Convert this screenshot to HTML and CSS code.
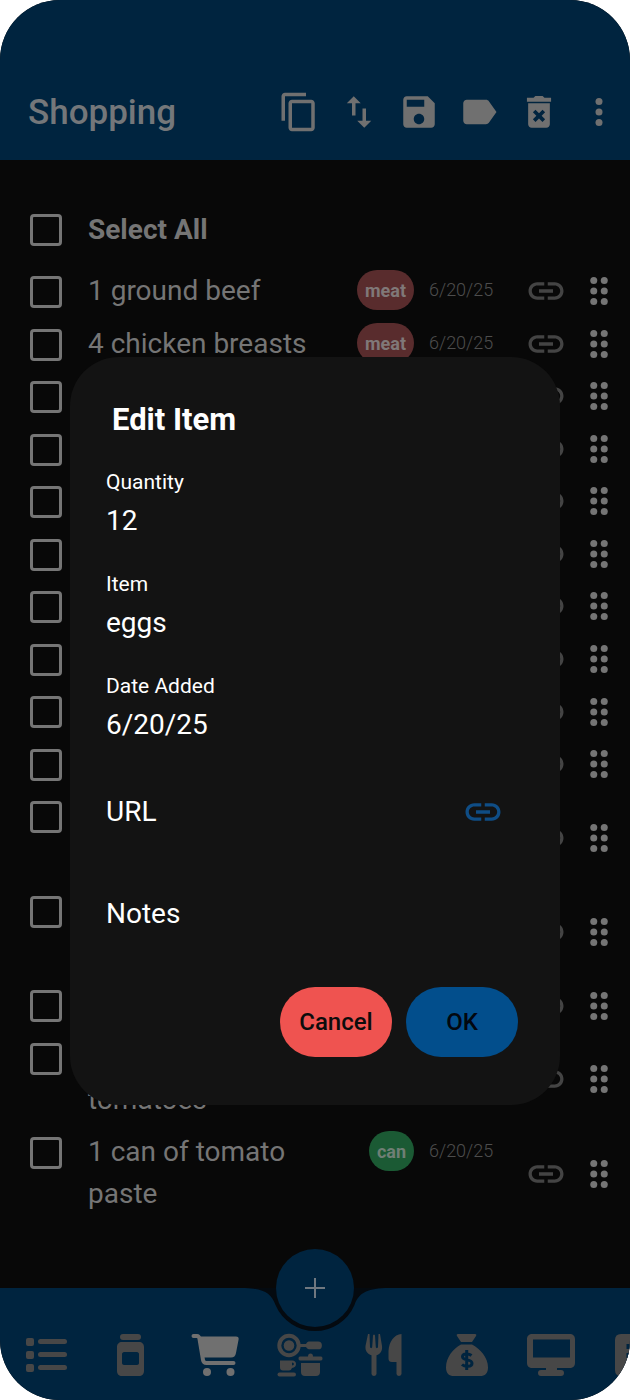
FILE: index.html
```html
<!DOCTYPE html>
<html lang="en">
<head>
<meta charset="utf-8">
<meta name="viewport" content="width=device-width, initial-scale=1">
<title>Shopping</title>
<link rel="stylesheet" href="styles.css">
</head>
<body>
<svg class="sprite" aria-hidden="true">
  <symbol id="link" viewBox="0 0 24 24"><path d="M3.9 12c0-1.71 1.39-3.1 3.1-3.1h4V7H7c-2.76 0-5 2.24-5 5s2.24 5 5 5h4v-1.9H7c-1.71 0-3.1-1.39-3.1-3.1zM8 13h8v-2H8v2zm9-6h-4v1.9h4c1.71 0 3.1 1.39 3.1 3.1s-1.39 3.1-3.1 3.1h-4V17h4c2.76 0 5-2.24 5-5s-2.24-5-5-5z"/></symbol>
  <symbol id="drag" viewBox="0 0 24 24"><circle cx="9" cy="6" r="2"/><circle cx="9" cy="12" r="2"/><circle cx="9" cy="18" r="2"/><circle cx="15" cy="6" r="2"/><circle cx="15" cy="12" r="2"/><circle cx="15" cy="18" r="2"/></symbol>
</svg>
<div class="app">
  <header class="toolbar">
    <h1 class="toolbar-title">Shopping</h1>
    <button class="tool" aria-label="Copy"><svg class="icon" viewBox="0 0 24 24"><path d="M16 1H4c-1.1 0-2 .9-2 2v14h2V3h12V1zm3 4H8c-1.1 0-2 .9-2 2v14c0 1.1.9 2 2 2h11c1.1 0 2-.9 2-2V7c0-1.1-.9-2-2-2zm0 16H8V7h11v14z"/></svg></button>
    <button class="tool" aria-label="Sort"><svg class="icon" viewBox="0 0 24 24"><path d="M16 17.01V10h-2v7.01h-3L15 21l4-3.99h-3zM9 3L5 6.99h3V14h2V6.99h3L9 3z"/></svg></button>
    <button class="tool" aria-label="Save"><svg class="icon" viewBox="0 0 24 24"><path d="M17 3H5c-1.11 0-2 .9-2 2v14c0 1.1.89 2 2 2h14c1.1 0 2-.9 2-2V7l-4-4zm-5 16c-1.66 0-3-1.34-3-3s1.34-3 3-3 3 1.34 3 3-1.34 3-3 3zm3-10H5V5h10v4z"/></svg></button>
    <button class="tool" aria-label="Label"><svg class="icon" viewBox="0 0 24 24"><path d="M17.63 5.84C17.27 5.33 16.67 5 16 5L5 5.01C3.9 5.01 3 5.9 3 7v10c0 1.1.9 1.99 2 1.99L16 19c.67 0 1.27-.33 1.63-.84L22 12l-4.37-6.16z"/></svg></button>
    <button class="tool" aria-label="Delete"><svg class="icon" viewBox="0 0 24 24"><path d="M5.1 3.8h3.8l1-.9h4.2l1 .9h3.8v2.3H5.1z"/><path fill-rule="evenodd" d="M5.8 7h12.4v12c0 1.1-.9 2-2 2H7.8c-1.1 0-2-.9-2-2zM12 12.7l-2-2-1.5 1.500 2 2-2 2 1.500 1.500 2-2 2 2 1.500-1.500-2-2 2-2-1.500-1.500z"/></svg></button>
    <button class="tool" aria-label="More"><svg class="icon" viewBox="0 0 24 24"><circle cx="12" cy="6" r="2"/><circle cx="12" cy="12" r="2"/><circle cx="12" cy="18" r="2"/></svg></button>
  </header>

  <main class="content">
    <label class="select-all"><input class="check" type="checkbox"><span>Select All</span></label>
    <ul class="list">
      <li class="row"><input class="check" type="checkbox" id="i1"><label class="name" for="i1">1 ground beef</label><span class="tag tag-meat">meat</span><span class="date">6/20/25</span><button class="row-btn row-link" aria-label="Link"><svg class="icon"><use href="#link"/></svg></button><button class="row-btn" aria-label="Move"><svg class="icon"><use href="#drag"/></svg></button></li>
      <li class="row"><input class="check" type="checkbox" id="i2"><label class="name" for="i2">4 chicken breasts</label><span class="tag tag-meat">meat</span><span class="date">6/20/25</span><button class="row-btn row-link" aria-label="Link"><svg class="icon"><use href="#link"/></svg></button><button class="row-btn" aria-label="Move"><svg class="icon"><use href="#drag"/></svg></button></li>
      <li class="row"><input class="check" type="checkbox" aria-label="Item"><span class="name"></span><button class="row-btn row-link" aria-label="Link"><svg class="icon"><use href="#link"/></svg></button><button class="row-btn" aria-label="Move"><svg class="icon"><use href="#drag"/></svg></button></li>
      <li class="row"><input class="check" type="checkbox" aria-label="Item"><span class="name"></span><button class="row-btn row-link" aria-label="Link"><svg class="icon"><use href="#link"/></svg></button><button class="row-btn" aria-label="Move"><svg class="icon"><use href="#drag"/></svg></button></li>
      <li class="row"><input class="check" type="checkbox" aria-label="Item"><span class="name"></span><button class="row-btn row-link" aria-label="Link"><svg class="icon"><use href="#link"/></svg></button><button class="row-btn" aria-label="Move"><svg class="icon"><use href="#drag"/></svg></button></li>
      <li class="row"><input class="check" type="checkbox" aria-label="Item"><span class="name"></span><button class="row-btn row-link" aria-label="Link"><svg class="icon"><use href="#link"/></svg></button><button class="row-btn" aria-label="Move"><svg class="icon"><use href="#drag"/></svg></button></li>
      <li class="row"><input class="check" type="checkbox" aria-label="Item"><span class="name"></span><button class="row-btn row-link" aria-label="Link"><svg class="icon"><use href="#link"/></svg></button><button class="row-btn" aria-label="Move"><svg class="icon"><use href="#drag"/></svg></button></li>
      <li class="row"><input class="check" type="checkbox" aria-label="Item"><span class="name"></span><button class="row-btn row-link" aria-label="Link"><svg class="icon"><use href="#link"/></svg></button><button class="row-btn" aria-label="Move"><svg class="icon"><use href="#drag"/></svg></button></li>
      <li class="row"><input class="check" type="checkbox" aria-label="Item"><span class="name"></span><button class="row-btn row-link" aria-label="Link"><svg class="icon"><use href="#link"/></svg></button><button class="row-btn" aria-label="Move"><svg class="icon"><use href="#drag"/></svg></button></li>
      <li class="row"><input class="check" type="checkbox" aria-label="Item"><span class="name"></span><button class="row-btn row-link" aria-label="Link"><svg class="icon"><use href="#link"/></svg></button><button class="row-btn" aria-label="Move"><svg class="icon"><use href="#drag"/></svg></button></li>
      <li class="row row-tall"><input class="check" type="checkbox" aria-label="Item"><span class="name"></span><button class="row-btn row-link" aria-label="Link"><svg class="icon"><use href="#link"/></svg></button><button class="row-btn" aria-label="Move"><svg class="icon"><use href="#drag"/></svg></button></li>
      <li class="row row-tall"><input class="check" type="checkbox" aria-label="Item"><span class="name"></span><button class="row-btn row-link" aria-label="Link"><svg class="icon"><use href="#link"/></svg></button><button class="row-btn" aria-label="Move"><svg class="icon"><use href="#drag"/></svg></button></li>
      <li class="row"><input class="check" type="checkbox" aria-label="Item"><span class="name"></span><button class="row-btn row-link" aria-label="Link"><svg class="icon"><use href="#link"/></svg></button><button class="row-btn" aria-label="Move"><svg class="icon"><use href="#drag"/></svg></button></li>
      <li class="row row-tall"><input class="check" type="checkbox" id="i14"><label class="name" for="i14">&nbsp;<br>tomatoes</label><button class="row-btn row-link" aria-label="Link"><svg class="icon"><use href="#link"/></svg></button><button class="row-btn" aria-label="Move"><svg class="icon"><use href="#drag"/></svg></button></li>
      <li class="row row-tall"><input class="check" type="checkbox" id="i15"><label class="name" for="i15">1 can of tomato<br>paste</label><span class="tag tag-can">can</span><span class="date">6/20/25</span><button class="row-btn row-link" aria-label="Link"><svg class="icon"><use href="#link"/></svg></button><button class="row-btn" aria-label="Move"><svg class="icon"><use href="#drag"/></svg></button></li>
    </ul>
  </main>

  <footer class="bottom">
    <svg class="notch" viewBox="0 0 150 56" aria-hidden="true"><path d="M5 0C24 1 31 5 35.500 17A43 43 0 0 0 114.500 17C119 5 126 1 145 0z"/></svg>
    <button class="fab" aria-label="Add item"><svg class="fab-plus" viewBox="0 0 20 20"><path d="M10 0v20M0 10h20"/></svg></button>
    <nav class="tabs">
      <a class="tab" href="#lists" aria-label="Lists"><svg viewBox="0 0 48 44"><rect x="3" y="5" width="8" height="8" rx="2"/><rect x="3" y="18" width="8" height="8" rx="2"/><rect x="3" y="31" width="8" height="8" rx="2"/><rect x="15" y="6" width="29" height="5" rx="2.500"/><rect x="15" y="19" width="29" height="5" rx="2.500"/><rect x="15" y="32" width="29" height="5" rx="2.500"/></svg></a>
      <a class="tab" href="#pantry" aria-label="Pantry"><svg viewBox="0 0 48 44"><rect x="13" y="1" width="21" height="6" rx="3"/><path fill-rule="evenodd" d="M15 9h17c3 0 5 2 5 5v24c0 3-2 5-5 5H15c-3 0-5-2-5-5V14c0-3 2-5 5-5zm2 10c-1 0-2 1-2 2v9c0 1 1 2 2 2h13c1 0 2-1 2-2v-9c0-1-1-2-2-2z"/></svg></a>
      <a class="tab tab-active" href="#shopping" aria-label="Shopping" aria-current="page"><svg viewBox="0 0 48 44"><path d="M2.500 3H6q2 0 2.500 3l3.500 21q.5 3 3.500 3h27" fill="none" stroke="currentColor" stroke-width="4" stroke-linecap="round"/><path d="M8 3.500h37c2 0 3 1 2.600 3L45 20c-.6 3-2 4.500-5 4.500H11.500z"/><circle cx="16" cy="39" r="4"/><circle cx="39.500" cy="39" r="4"/></svg></a>
      <a class="tab" href="#equipment" aria-label="Equipment"><svg viewBox="0 0 48 44"><circle cx="14" cy="12.500" r="9.700" fill="none" stroke="currentColor" stroke-width="4"/><circle cx="14" cy="12.500" r="5.300"/><path d="M24 11h7c1-2 2-2.500 4-2.500h8a3.900 3.900 0 0 1 0 7.800h-8c-2 0-3-.5-4-2.300h-7z"/><path d="M25 23.500h8q0-3 2.500-3t2.500 3h8q1.500 0 1.500 2t-1.500 2H25q-1.500 0-1.500-2t1.500-2zM26 30h19v9q0 4-4 4H30q-4 0-4-4z"/><path fill-rule="evenodd" d="M5 27.500h12q4 0 4 3.500t-4 4q-1 2.500-3 2.500H8q-3 0-3-3zm12 2v3q2-.2 2-1.500t-2-1.500z"/><rect x="2.500" y="39.500" width="18.500" height="4" rx="2"/></svg></a>
      <a class="tab" href="#recipes" aria-label="Recipes"><svg viewBox="0 0 48 44"><path d="M9 1h1.500L11 14c.2 1.500 2 1.500 2.200 0L14 2.500q1-2 2 0l.8 11.500c.2 1.500 2 1.500 2.200 0L19.500 1H21l2 12c.5 5-1.500 8-5.500 9.200V41a2.600 2.600 0 0 1-5 0V22.200C8.500 21 6 18 6.500 13zM42.500 1v40a2.600 2.600 0 0 1-5 0V29H33q-3.500 0-3.500-3.500V18C30 9 35 1.500 42.500 1z"/></svg></a>
      <a class="tab" href="#budget" aria-label="Budget"><svg viewBox="0 0 48 44"><path d="M15 1h17q2 0 1 2l-4 6H18l-4-6q-1-2 1-2zM18 11.500h11c8 4 16 13 16 23 0 6-3 8.500-8 8.500H11c-5 0-8-2.500-8-8.500 0-10 7-19 15-23z"/><path class="cut" d="M23.700 17v20M28.500 22.500c-2.500-2-9-2.400-9 1.200 0 4.300 9.500 2 9.500 6.500 0 4.300-7.500 3.600-10 1.300"/></svg></a>
      <a class="tab" href="#devices" aria-label="Devices"><svg viewBox="0 0 48 44"><path fill-rule="evenodd" d="M5.500 1h37C46 1 48 3 48 6v24c0 3-2 5-5.500 5H30v2h4a3 3 0 0 1 0 6H14a3 3 0 0 1 0-6h5v-2H5.500C2 35 0 33 0 30V6c0-3 2-5 5.500-5zM6 6.500v18h37v-18z"/></svg></a>
      <a class="tab" href="#contacts" aria-label="Contacts"><svg viewBox="0 0 48 44"><path d="M10 1h24v42H10q-6 0-6-6V7q0-6 6-6z"/><path class="cut" d="M17 11v5M17 20v5"/></svg></a>
    </nav>
  </footer>

  <div class="overlay">
    <form class="dialog" role="dialog" aria-labelledby="dialog-title">
      <h2 class="dialog-title" id="dialog-title">Edit Item</h2>
      <div class="fields">
        <div class="field"><label class="field-label" for="quantity">Quantity</label><input class="field-input" id="quantity" type="text" value="12"></div>
        <div class="field"><label class="field-label" for="item">Item</label><input class="field-input" id="item" type="text" value="eggs"></div>
        <div class="field"><label class="field-label" for="added">Date Added</label><input class="field-input" id="added" type="text" value="6/20/25"></div>
        <div class="field field-single"><input class="field-input" id="url" type="text" placeholder="URL" aria-label="URL"><button class="url-link" type="button" aria-label="Open link"><svg class="icon"><use href="#link"/></svg></button></div>
        <div class="field field-single"><input class="field-input" id="notes" type="text" placeholder="Notes" aria-label="Notes"></div>
      </div>
      <div class="actions">
        <button class="action action-cancel" type="button">Cancel</button>
        <button class="action action-ok" type="button">OK</button>
      </div>
    </form>
  </div>
</div>
</body>
</html>
```
FILE: styles.css
```css
* {
  box-sizing: border-box;
}

body {
  margin: 0;
  background: #ffffff;
  color: #757575;
  font-family: Roboto, "Noto Sans", sans-serif;
  font-size: 28px;
  line-height: 42px;
}

button,
input {
  margin: 0;
  padding: 0;
  border: 0;
  background: none;
  color: inherit;
  font: inherit;
}

.sprite {
  display: none;
}

.app {
  position: relative;
  display: flex;
  flex-direction: column;
  min-height: 100vh;
  overflow: hidden;
  border-radius: 60px;
  background: #080808;
}

.icon {
  display: block;
  width: 42px;
  height: 42px;
  fill: currentColor;
}

/* Toolbar */

.toolbar {
  display: flex;
  align-items: center;
  padding: 64px 1px 0 28px;
  height: 160px;
  background: #00243f;
}

.toolbar-title {
  flex: 1;
  margin: 0;
  padding-top: 2px;
  color: #74777a;
  font-size: 35px;
  font-weight: 500;
}

.tool {
  display: flex;
  justify-content: center;
  width: 60px;
  color: #707070;
}

/* Shopping list */

.content {
  flex: 1;
  display: flex;
  flex-direction: column;
  padding: 44px 0 67px;
}

.select-all {
  display: flex;
  align-items: center;
  gap: 26px;
  height: 52px;
  margin-bottom: 9px;
  padding-left: 30px;
  font-weight: 700;
}

.check {
  flex: none;
  appearance: none;
  width: 32px;
  height: 32px;
  border: 3px solid #757575;
  border-radius: 4px;
}

.list {
  flex: 1;
  display: flex;
  flex-direction: column;
  margin: 0;
  padding: 0;
  list-style: none;
}

.row {
  flex: 5 0 0;
  display: flex;
  align-items: flex-start;
  padding: 0 10px 0 30px;
}

.row-tall {
  flex-grow: 9;
}

.row .check {
  margin: 11px 26px 0 0;
}

.name {
  flex: 1;
  margin-top: 5px;
}

.tag {
  height: 40px;
  margin-top: 5px;
  padding: 0 8px;
  border-radius: 20px;
  font-size: 18px;
  font-weight: 700;
  line-height: 42px;
}

.tag-meat {
  background: #592c2d;
  color: #807878;
}

.tag-can {
  background: #1b5a34;
  color: #6f7f75;
}

.date {
  width: 96px;
  margin: 5px 0 0 15px;
  color: #4d4d4d;
  font-size: 18px;
  font-weight: 300;
  line-height: 39px;
}

.row-btn {
  align-self: center;
  margin-left: 11px;
}

.row-link {
  margin-left: 0;
  color: #444444;
}

/* Bottom bar */

.bottom {
  position: relative;
  height: 112px;
  background: #00243f;
}

.notch {
  position: absolute;
  top: 0;
  left: 50%;
  width: 150px;
  height: 56px;
  transform: translateX(-50%);
  fill: #040a10;
}

.fab {
  position: absolute;
  top: -39px;
  left: 50%;
  display: flex;
  align-items: center;
  justify-content: center;
  width: 78px;
  height: 78px;
  border-radius: 50%;
  background: #00243f;
  color: #707880;
  transform: translateX(-50%);
}

.fab-plus {
  width: 20px;
  height: 20px;
  fill: none;
  stroke: currentColor;
  stroke-width: 2;
}

.tabs {
  display: flex;
  padding: 45px 0 0 5px;
  overflow: hidden;
}

.tab {
  flex: none;
  display: flex;
  justify-content: center;
  width: 84px;
  color: #474747;
}

.tab-active {
  color: #707070;
}

.tab svg {
  width: 48px;
  height: 44px;
  fill: currentColor;
}

.tab .cut {
  fill: none;
  stroke: #00243f;
  stroke-width: 3;
}

/* Edit dialog */

.overlay {
  position: absolute;
  inset: 0;
  display: flex;
  align-items: center;
  padding: 62px 70px 0;
}

.dialog {
  flex: 1;
  min-width: 0;
  padding: 42px 42px 48px 36px;
  border-radius: 49px;
  background: #131313;
  color: #ffffff;
}

.dialog-title {
  margin: 0 0 29px;
  padding-left: 6px;
  font-size: 31px;
  font-weight: 700;
  line-height: 42px;
}

.fields {
  display: flex;
  flex-direction: column;
  gap: 30px;
}

.field {
  display: flex;
  flex-direction: column;
  gap: 6px;
  height: 72px;
}

.field-single {
  flex-direction: row;
  align-items: center;
}

.field-label {
  font-size: 21px;
  line-height: 24px;
}

.field-input {
  flex: 1;
  min-width: 0;
  height: 42px;
}

.field-input::placeholder {
  color: #ffffff;
  opacity: 1;
}

.url-link {
  margin-right: 14px;
  color: #0f4d85;
}

.actions {
  display: flex;
  justify-content: flex-end;
  gap: 14px;
  margin-top: 37px;
}

.action {
  width: 112px;
  height: 70px;
  border-radius: 35px;
  color: #0c0c0c;
  font-size: 24px;
  font-weight: 500;
}

.action-cancel {
  background: #ef5350;
}

.action-ok {
  background: #024e8c;
  color: #02070f;
}
```
